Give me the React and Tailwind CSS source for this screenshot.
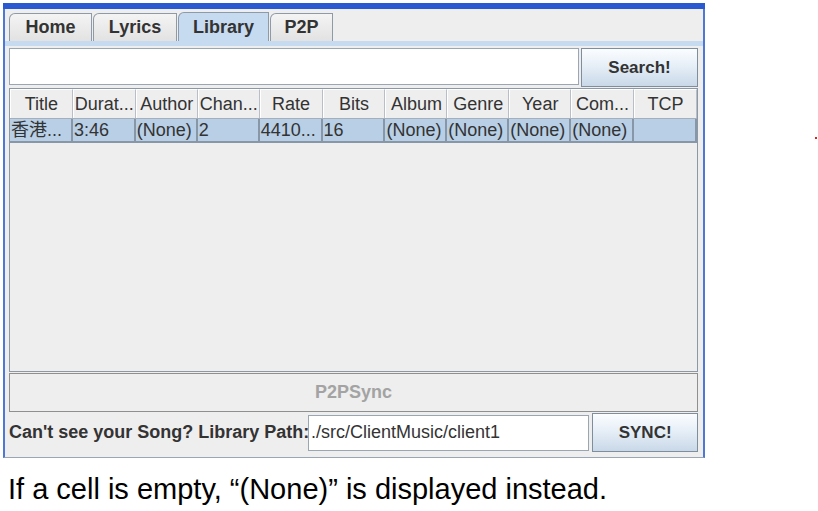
const cols = [
  { name: "Title", w: 63, val: "香港..." },
  { name: "Durat...", w: 63, val: "3:46" },
  { name: "Author", w: 62, val: "(None)" },
  { name: "Chan...", w: 62, val: "2" },
  { name: "Rate", w: 63, val: "4410..." },
  { name: "Bits", w: 63, val: "16" },
  { name: "Album", w: 62, val: "(None)" },
  { name: "Genre", w: 62, val: "(None)" },
  { name: "Year", w: 62, val: "(None)" },
  { name: "Com...", w: 63, val: "(None)" },
  { name: "TCP", w: 63, val: "" },
];

const tabs = [
  { label: "Home", w: 83 },
  { label: "Lyrics", w: 84 },
  { label: "Library", w: 91, active: true },
  { label: "P2P", w: 63 },
];

function Tab({ label, w, active }) {
  return (
    <div
      style={{ width: w }}
      className={`flex items-center justify-center border border-b-0 border-[#8f9aa8] rounded-tl-[6px] text-[18px] font-bold text-[#333] ${
        active ? "h-[30px] bg-[#c6daf0] -mb-[1px]" : "h-[28px] bg-gradient-to-b from-[#f4f4f4] to-[#e2e2e2]"
      }`}
    >
      {label}
    </div>
  );
}

function JButton({ children, className = "" }) {
  return (
    <div
      className={`flex items-center justify-center border border-[#7f8d9c] bg-gradient-to-b from-[#fbfdff] via-[#e4edf6] to-[#c9d8e8] font-bold text-[17px] text-[#333] ${className}`}
    >
      {children}
    </div>
  );
}

export default function App() {
  return (
    <div
      className="relative w-[818px] h-[511px] bg-white overflow-hidden"
      style={{ fontFamily: '"Liberation Sans", Arial, "Noto Sans CJK SC", sans-serif' }}
    >
      {/* window frame */}
      <div className="ml-[3px] mt-[3px] w-[702px] h-[455px] flex flex-col">
        <div className="h-[6px] bg-[#2b5ad0]" />
        <div className="flex-1 flex flex-col bg-[#eeeeee] border-l-[2px] border-r-[2px] border-[#4f77d6] border-b border-b-[#9aa6b4]">
          {/* tabs */}
          <div className="flex items-end gap-[1px] pl-[4px] h-[32px]">
            {tabs.map((t) => (
              <Tab key={t.label} {...t} />
            ))}
          </div>
          {/* content */}
          <div className="flex-1 flex flex-col border-t-[5px] border-[#c6daf0] pl-[4px] pr-[5px] pt-[2px] pb-[4px]">
            <div className="flex items-stretch h-[39px]">
              <div className="flex-1 mr-[2px] mb-[2px] bg-white border border-[#9aa6b4]" />
              <JButton className="w-[117px]">Search!</JButton>
            </div>
            {/* table */}
            <div className="mt-[1px] h-[284px] w-[689px] border border-[#8c98a6] bg-[#eeeeee] flex flex-col">
              <div className="flex h-[30px] border-b border-[#a5afbb]">
                {cols.map((c) => (
                  <div
                    key={c.name}
                    style={{ width: c.w }}
                    className="flex items-center justify-center border-t border-l border-t-white border-l-white border-r border-r-[#b7bec7] bg-[#eeeeee] text-[18px] text-[#333] whitespace-nowrap overflow-hidden"
                  >
                    {c.name}
                  </div>
                ))}
              </div>
              <div className="flex h-[24px] bg-[#b8cfe5] border-b-2 border-[#8797a8]">
                {cols.map((c) => (
                  <div
                    key={c.name}
                    style={{ width: c.w }}
                    className="flex items-center pl-[1px] border-r-2 border-[#8797a8] text-[18px] text-[#333] whitespace-nowrap overflow-hidden"
                  >
                    {c.val}
                  </div>
                ))}
              </div>
            </div>
            {/* P2PSync */}
            <div className="mt-[1px] h-[39px] w-[689px] border border-[#8f8f8f] flex items-center justify-center font-bold text-[18px] text-[#a3a3a3]">
              P2PSync
            </div>
            {/* bottom row */}
            <div className="flex items-center h-[41px]">
              <div className="w-[298px] font-bold text-[18px] text-[#333] whitespace-nowrap">
                Can't see your Song? Library Path:
              </div>
              <div className="ml-[1px] h-[36px] w-[282px] bg-white border border-[#9aa6b4] flex items-center pl-[2px] text-[18px] text-[#333] whitespace-nowrap">
                ./src/ClientMusic/client1
              </div>
              <JButton className="ml-[3px] h-[39px] w-[106px]">SYNC!</JButton>
            </div>
          </div>
        </div>
      </div>
      <div className="mt-[17px] ml-[8px] text-[29px] text-black whitespace-nowrap leading-none">
        If a cell is empty, “(None)” is displayed instead.
      </div>
      <div className="absolute left-[815px] top-[137px] w-[2px] h-[2px] bg-[#e02020]" />
    </div>
  );
}
